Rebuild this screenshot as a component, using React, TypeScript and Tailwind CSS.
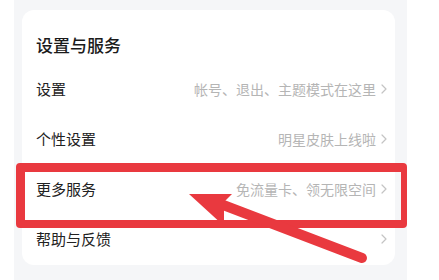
import React from "react";

const rows = [
  { label: "设置", hint: "帐号、退出、主题模式在这里" },
  { label: "个性设置", hint: "明星皮肤上线啦" },
  { label: "更多服务", hint: "免流量卡、领无限空间" },
  { label: "帮助与反馈", hint: "" },
];

function Chevron() {
  return (
    <svg width="6" height="10" viewBox="0 0 6 10" className="shrink-0">
      <path d="M1 1 L5 5 L1 9" fill="none" stroke="#c4c4c4" strokeWidth="1.2" strokeLinecap="round" strokeLinejoin="round" />
    </svg>
  );
}

export default function App() {
  return (
    <div
      className="relative w-[439px] h-[280px] bg-white overflow-hidden"
      style={{ fontFamily: '"Noto Sans CJK SC", "Noto Sans", sans-serif' }}
    >
      <div className="ml-[14px] w-[393px] h-full bg-[#f5f6f8] pt-[10px] pl-[8px]">
        <div className="w-[373px] h-[255px] bg-white rounded-[12px] pt-[24px]">
          <div className="pl-[14px] h-[22px] flex items-center text-[17px] leading-[22px] font-medium text-[#1b1b1b]">
            设置与服务
          </div>
          <div className="mt-[8px] flex flex-col">
            {rows.map((r) => (
              <div key={r.label} className="h-[50px] flex items-center pl-[14px] pr-[8px]">
                <span className="text-[15px] text-[#222222]">{r.label}</span>
                <span className="ml-auto text-[14px] text-[#b5b5b5] mr-[5px]">{r.hint}</span>
                <Chevron />
              </div>
            ))}
          </div>
        </div>
      </div>

      <div className="absolute left-[16px] top-[163px] w-[391px] h-[65px] border-l-[9px] border-t-[9px] border-r-[6px] border-b-[8px] border-[#e9393f] rounded-[4px] pointer-events-none" />

      <svg
        className="absolute left-0 top-0 pointer-events-none"
        width="439"
        height="280"
        viewBox="0 0 439 280"
      >
        <line x1="218" y1="203" x2="362" y2="258" stroke="#e9393f" strokeWidth="10" strokeLinecap="round" />
        <polygon points="189,194 232,194 224,202 224,226" fill="#e9393f" />
      </svg>
    </div>
  );
}
